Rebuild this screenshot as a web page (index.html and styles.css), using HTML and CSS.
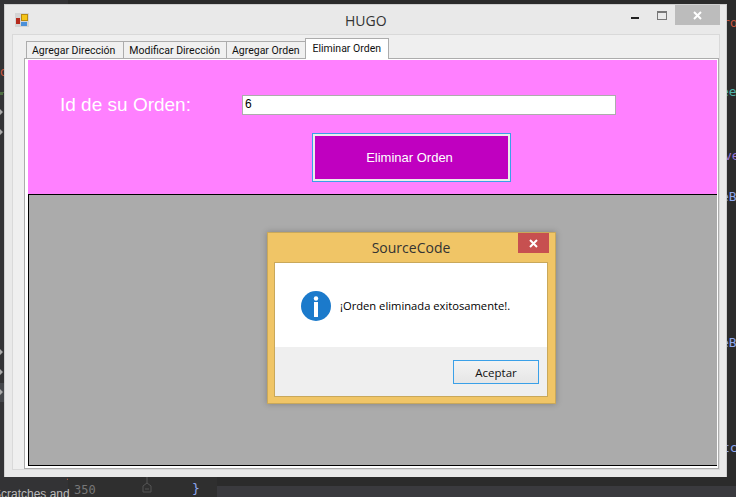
FILE: index.html
```html
<!DOCTYPE html>
<html lang="en">
<head>
    <meta charset="UTF-8">
    <meta name="viewport" content="width=device-width, initial-scale=1.0">
    <title>HUGO</title>
    <link rel="stylesheet" href="styles.css">
</head>
<body>
    <!-- editor showing behind the window -->
    <div class="editor">
        <div class="tool-panel"></div>
        <span class="code-bit red small" style="left:15px;top:466px">ain Program</span>
        <div class="gutter"></div>
        <div class="editor-bar"></div>
        <div class="side-mark"></div>
        <svg class="side-icons" width="4" height="340" viewBox="0 0 4 340">
            <path d="M0 0H4M0 2H3" stroke="#6aa84f" stroke-width="1"/>
            <path d="M0 17L3 20L0 23ZM0 37L3 40L0 43ZM0 257L3 260L0 263ZM0 277L3 280L0 283ZM0 297L3 300L0 303Z" fill="#aaaaaa"/>
        </svg>
        <span class="code-bit red" style="left:722px;top:15px">ro</span>
        <span class="code-bit teal" style="left:721px;top:84px">ee</span>
        <span class="code-bit purple" style="left:724px;top:148px">ve</span>
        <span class="code-bit blue" style="left:721px;top:189px">eB</span>
        <span class="code-bit blue" style="left:721px;top:335px">eB</span>
        <span class="code-bit blue" style="left:722px;top:440px">tc</span>
        <span class="code-bit red" style="left:-8px;top:64px">Go</span>
        <span class="code-bit side" style="left:-7px;top:487px">Scratches and</span>
        <span class="code-bit num" style="left:74px;top:483px">350</span>
        <span class="code-bit blue" style="left:192px;top:481px">}</span>
        <svg class="fold-mark" width="10" height="20" viewBox="0 0 10 20">
            <path d="M5 0V6L1 9V15H9V9L5 6M3 12H7" fill="none" stroke="#555" stroke-width="1"/>
        </svg>
    </div>

    <div class="window">
        <div class="titlebar">
            <svg class="app-icon" width="14" height="14" viewBox="0 0 14 14">
                <rect width="14" height="14" fill="#d4d4d4"/>
                <rect x="6.5" y="1.5" width="6" height="6" fill="#f5c518" stroke="#b98a10"/>
                <rect x="1" y="5" width="4" height="6" fill="#b52a1c"/>
                <rect x="6" y="9" width="6" height="4" fill="#4a90d9"/>
            </svg>
            <div class="title">HUGO</div>
            <div class="win-controls">
                <div class="win-min"></div>
                <div class="win-max"></div>
                <div class="win-close">
                    <svg width="9" height="9" viewBox="0 0 9 9"><path d="M1 1L8 8M8 1L1 8" stroke="#fff" stroke-width="2"/></svg>
                </div>
            </div>
        </div>

        <div class="client">
            <div class="tabs">
                <div class="tab">Agregar Dirección</div>
                <div class="tab">Modificar Dirección</div>
                <div class="tab">Agregar Orden</div>
                <div class="tab active">Eliminar Orden</div>
            </div>
            <div class="tab-page">
                <div class="form-panel">
                    <div class="form-row">
                        <label class="form-label">Id de su Orden:</label>
                        <div class="text-input">6</div>
                    </div>
                    <button class="delete-button">Eliminar Orden</button>
                </div>
                <div class="grid-area"></div>
            </div>
        </div>
    </div>

    <div class="dialog">
        <div class="dialog-title">
            <span>SourceCode</span>
            <div class="dialog-close">
                <svg width="9" height="9" viewBox="0 0 9 9"><path d="M1 1L8 8M8 1L1 8" stroke="#fff" stroke-width="2"/></svg>
            </div>
        </div>
        <div class="dialog-inner">
            <div class="dialog-body">
                <svg class="info-icon" width="30" height="30" viewBox="0 0 30 30">
                    <circle cx="15" cy="15" r="15" fill="#1b7acb"/>
                    <circle cx="15" cy="7.5" r="2.2" fill="#fff"/>
                    <rect x="13" y="11" width="4" height="15" fill="#fff"/>
                </svg>
                <span class="dialog-text">¡Orden eliminada exitosamente!.</span>
            </div>
            <div class="dialog-footer">
                <button class="ok-button">Aceptar</button>
            </div>
        </div>
    </div>
</body>
</html>
```

FILE: styles.css
```css
html, body {
    margin: 0;
    padding: 0;
}
body {
    width: 736px;
    height: 497px;
    overflow: hidden;
    position: relative;
    background-color: #2b2b2b;
    font-family: "Liberation Sans", Arial, sans-serif;
    padding-top: 4px;
    padding-left: 4px;
    box-sizing: border-box;
}
.code-bit {
    position: absolute;
    font-family: "DejaVu Sans Mono", monospace;
    font-size: 13px;
    white-space: nowrap;
}
.red { color: #c8553d; }
.teal { color: #4fb3a9; }
.purple { color: #9876d8; }
.blue { color: #8fa8f0; }
.small { font-size: 12px; }
.side { color: #bbbbbb; font-family: "Liberation Sans", sans-serif; font-size: 12px; }
.num { color: #777777; font-size: 12px; }
.tool-panel {
    position: absolute;
    left: 0;
    top: 0;
    width: 68px;
    height: 497px;
    background-color: #333335;
}
.gutter {
    position: absolute;
    left: 68px;
    top: 477px;
    width: 149px;
    height: 20px;
    background-color: #2f2f2f;
}
.editor-bar {
    position: absolute;
    left: 217px;
    top: 486px;
    width: 519px;
    height: 11px;
    background-color: #3a3a3e;
}
.side-mark {
    position: absolute;
    left: 0;
    top: 383px;
    width: 4px;
    height: 19px;
    background-color: #45474b;
}
.side-icons {
    position: absolute;
    left: 0;
    top: 92px;
}
.fold-mark {
    position: absolute;
    left: 142px;
    top: 477px;
}
.window {
    position: relative;
    width: 723px;
    height: 473px;
    box-sizing: border-box;
    background-color: #e9e9e9;
    border: 1px solid #cfcfcf;
    border-bottom: 0;
    display: flex;
    flex-direction: column;
}
.titlebar {
    height: 29px;
    display: flex;
    align-items: center;
    position: relative;
}
.app-icon {
    margin-left: 10px;
}
.title {
    position: absolute;
    left: 340px;
    top: 6px;
    font-family: "Open Sans", sans-serif;
    font-size: 14px;
    color: #333;
}
.win-controls {
    margin-left: auto;
    margin-right: 6px;
    display: flex;
    align-items: flex-start;
    height: 100%;
}
.win-min {
    width: 8px;
    height: 2px;
    background-color: #222;
    margin-top: 12px;
    margin-right: 18px;
}
.win-max {
    width: 8px;
    height: 6px;
    border: 1px solid #777;
    border-top-width: 2px;
    margin-top: 6px;
    margin-right: 8px;
}
.win-close {
    width: 45px;
    height: 20px;
    background-color: #bcbcbc;
    display: flex;
    align-items: center;
    justify-content: center;
}
.client {
    margin-left: 7px;
    width: 708px;
    height: 436px;
    box-sizing: border-box;
    background-color: #efefef;
    border: 1px solid #d9d9d9;
    padding: 3px 0 0 11px;
}
.tabs {
    display: flex;
    height: 20px;
    margin-left: 2px;
    align-items: flex-end;
    position: relative;
    z-index: 1;
}
.tab {
    height: 17px;
    box-sizing: border-box;
    border: 1px solid #acacac;
    border-bottom: 0;
    margin-right: -1px;
    padding: 2px 6px 0 5px;
    font-family: Roboto, "Liberation Sans", sans-serif;
    font-size: 10.5px;
    color: #111;
    background-color: #f0f0f0;
    white-space: nowrap;
}
.tab:first-child {
    padding-right: 8px;
}
.tab:nth-child(3) {
    padding-right: 5px;
}
.tab.active {
    height: 21px;
    background-color: #fff;
    padding: 3px 7px 0;
    margin-bottom: -1px;
}
.tab-page {
    width: 695px;
    height: 411px;
    box-sizing: border-box;
    border: 1px solid #acacac;
    background-color: #fff;
    padding: 1px 1px 2px 3px;
    display: flex;
    flex-direction: column;
}
.form-panel {
    height: 134px;
    background-color: #ff80ff;
    display: flex;
    flex-direction: column;
    align-items: flex-start;
    box-sizing: border-box;
    padding-top: 35px;
}
.form-row {
    display: flex;
    align-items: center;
    height: 20px;
    padding-left: 32px;
}
.form-label {
    width: 182px;
    color: #fff;
    font-size: 19px;
}
.text-input {
    width: 374px;
    height: 20px;
    box-sizing: border-box;
    background-color: #fff;
    border: 1px solid #acacac;
    padding: 1px 2px;
    font-size: 12px;
    color: #000;
}
.delete-button {
    margin-top: 19px;
    margin-left: 285px;
    width: 197px;
    height: 47px;
    box-sizing: border-box;
    background-color: #c000c0;
    border: 2px solid #ececec;
    outline: 1px solid #3aa0e8;
    padding: 0 4px 0 0;
    color: #fff;
    font-family: "Liberation Sans", Arial, sans-serif;
    font-size: 13px;
}
.grid-area {
    flex: 1;
    background-color: #ababab;
    border-top: 1px solid #000;
    border-left: 1px solid #000;
    border-bottom: 1px solid #000;
}
.dialog {
    position: absolute;
    left: 267px;
    top: 232px;
    width: 289px;
    height: 172px;
    box-sizing: border-box;
    background-color: #f0c566;
    border: 1px solid #c9a85a;
    padding: 0 7px 6px 6px;
    display: flex;
    flex-direction: column;
    box-shadow: 0 0 6px rgba(0, 0, 0, 0.25);
}
.dialog-title {
    height: 29px;
    display: flex;
    align-items: center;
    justify-content: center;
    position: relative;
    font-family: "Open Sans", sans-serif;
    font-size: 14px;
    color: #333;
}
.dialog-close {
    position: absolute;
    right: -1px;
    top: 0;
    width: 31px;
    height: 20px;
    background-color: #c75050;
    display: flex;
    align-items: center;
    justify-content: center;
}
.dialog-inner {
    flex: 1;
    border: 1px solid #c9a85a;
    display: flex;
    flex-direction: column;
}
.dialog-body {
    height: 84px;
    background-color: #fff;
    display: flex;
    align-items: center;
    padding-left: 26px;
    box-sizing: border-box;
}
.info-icon {
    margin-top: 2px;
}
.dialog-text {
    margin-left: 9px;
    font-family: "Open Sans", sans-serif;
    font-size: 11.2px;
    color: #000;
}
.dialog-footer {
    flex: 1;
    background-color: #efefef;
    display: flex;
    justify-content: flex-end;
    align-items: flex-start;
    padding: 13px 8px 0 0;
}
.ok-button {
    width: 86px;
    height: 24px;
    box-sizing: border-box;
    border: 1px solid #3aa0e8;
    background: linear-gradient(#f3f3f3, #e6e6e6);
    font-family: "Open Sans", sans-serif;
    font-size: 11.5px;
    color: #111;
}
```
